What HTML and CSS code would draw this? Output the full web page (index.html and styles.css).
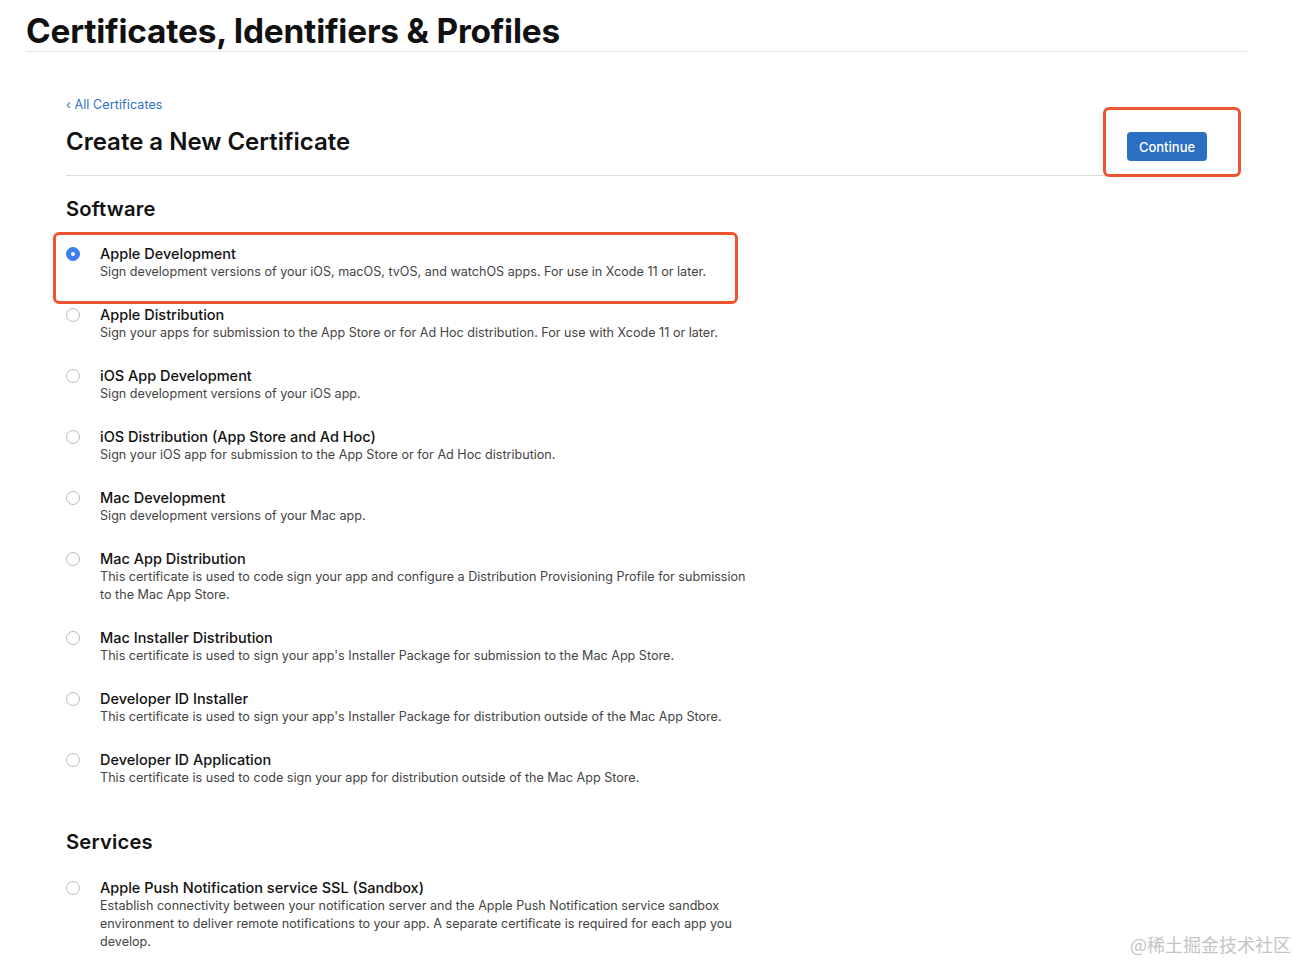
FILE: index.html
```html
<!DOCTYPE html>
<html lang="en">
<head>
<meta charset="utf-8">
<title>Certificates, Identifiers &amp; Profiles</title>
<link rel="stylesheet" href="styles.css">
</head>
<body>
<header class="page-header">
  <h1 class="page-title">Certificates, Identifiers &amp; Profiles</h1>
</header>
<main class="content">
  <div class="top-row">
    <div class="top-left">
      <a class="back-link" href="#">&#8249; All Certificates</a>
      <h2 class="cert-title">Create a New Certificate</h2>
    </div>
    <div class="continue-box">
      <button class="btn-continue" type="button">Continue</button>
    </div>
  </div>

  <section class="group">
    <h3 class="group-title">Software</h3>
    <ul class="options">
      <li class="option selected">
        <span class="radio"></span>
        <div class="option-text">
          <div class="option-name">Apple Development</div>
          <div class="option-desc">Sign development versions of your iOS, macOS, tvOS, and watchOS apps. For use in Xcode 11 or later.</div>
        </div>
      </li>
      <li class="option">
        <span class="radio"></span>
        <div class="option-text">
          <div class="option-name">Apple Distribution</div>
          <div class="option-desc">Sign your apps for submission to the App Store or for Ad Hoc distribution. For use with Xcode 11 or later.</div>
        </div>
      </li>
      <li class="option">
        <span class="radio"></span>
        <div class="option-text">
          <div class="option-name">iOS App Development</div>
          <div class="option-desc">Sign development versions of your iOS app.</div>
        </div>
      </li>
      <li class="option">
        <span class="radio"></span>
        <div class="option-text">
          <div class="option-name">iOS Distribution (App Store and Ad Hoc)</div>
          <div class="option-desc">Sign your iOS app for submission to the App Store or for Ad Hoc distribution.</div>
        </div>
      </li>
      <li class="option">
        <span class="radio"></span>
        <div class="option-text">
          <div class="option-name">Mac Development</div>
          <div class="option-desc">Sign development versions of your Mac app.</div>
        </div>
      </li>
      <li class="option">
        <span class="radio"></span>
        <div class="option-text">
          <div class="option-name">Mac App Distribution</div>
          <div class="option-desc">This certificate is used to code sign your app and configure a Distribution Provisioning Profile for submission to the Mac App Store.</div>
        </div>
      </li>
      <li class="option">
        <span class="radio"></span>
        <div class="option-text">
          <div class="option-name">Mac Installer Distribution</div>
          <div class="option-desc">This certificate is used to sign your app's Installer Package for submission to the Mac App Store.</div>
        </div>
      </li>
      <li class="option">
        <span class="radio"></span>
        <div class="option-text">
          <div class="option-name">Developer ID Installer</div>
          <div class="option-desc">This certificate is used to sign your app's Installer Package for distribution outside of the Mac App Store.</div>
        </div>
      </li>
      <li class="option">
        <span class="radio"></span>
        <div class="option-text">
          <div class="option-name">Developer ID Application</div>
          <div class="option-desc">This certificate is used to code sign your app for distribution outside of the Mac App Store.</div>
        </div>
      </li>
    </ul>
  </section>

  <section class="group services">
    <h3 class="group-title">Services</h3>
    <ul class="options">
      <li class="option">
        <span class="radio"></span>
        <div class="option-text">
          <div class="option-name">Apple Push Notification service SSL (Sandbox)</div>
          <div class="option-desc">Establish connectivity between your notification server and the Apple Push Notification service sandbox environment to deliver remote notifications to your app. A separate certificate is required for each app you develop.</div>
        </div>
      </li>
    </ul>
  </section>
</main>
<div class="watermark">@稀土掘金技术社区</div>
</body>
</html>
```

FILE: styles.css
```css
*, *::before, *::after { box-sizing: border-box; }
html, body { margin: 0; padding: 0; }
body {
  background: #ffffff;
  color: #1d1d1f;
  font-family: Inter, "Noto Sans", "Liberation Sans", sans-serif;
  width: 1297px;
  height: 961px;
  overflow: hidden;
  position: relative;
}
.page-header {
  margin: 0 50px 0 26px;
  border-bottom: 1px solid #e3e3e3;
  padding-top: 11px;
  height: 52px;
}
.page-title {
  margin: 0;
  font-size: 33.4px;
  font-weight: 700;
  line-height: 40px;
  letter-spacing: -0.2px;
  color: #111111;
}
.content {
  padding: 0 56px 0 66px;
}
.top-row {
  display: flex;
  justify-content: space-between;
  align-items: flex-start;
  border-bottom: 1px solid #dcdcdc;
  height: 124px;
  margin-right: 1px;
}
.top-left {
  padding-top: 44px;
}
.back-link {
  display: block;
  color: #2d72c4;
  font-size: 12.5px;
  line-height: 18px;
  text-decoration: none;
  letter-spacing: 0.1px;
}
.cert-title {
  margin: 13px 0 0 0;
  font-size: 24px;
  font-weight: 600;
  line-height: 30px;
  color: #111111;
}
.continue-box {
  margin-top: 55px;
  margin-right: -1px;
  width: 138px;
  height: 70px;
  border: 3px solid #ec5530;
  border-radius: 6px;
  padding: 22px 0 0 21px;
  background: #ffffff;
}
.btn-continue {
  display: block;
  background: #2b6fc2;
  color: #ffffff;
  border: none;
  border-radius: 4px;
  font-family: Inter, "Noto Sans", sans-serif;
  font-size: 13px;
  font-weight: 500;
  width: 80px;
  height: 29px;
  padding: 0;
}
.group-title {
  margin: 20px 0 0 0;
  font-size: 20.2px;
  font-weight: 600;
  line-height: 26px;
  color: #111111;
  letter-spacing: 0.2px;
}
.options {
  list-style: none;
  margin: 23px 0 0 0;
  padding: 0;
  display: flex;
  flex-direction: column;
  gap: 25px;
}
.option {
  display: flex;
  align-items: flex-start;
  position: relative;
}
.option.selected::before {
  content: "";
  position: absolute;
  left: -13px;
  top: -13px;
  width: 685px;
  height: 72px;
  border: 3px solid #ec5530;
  border-radius: 6px;
  pointer-events: none;
}
.radio {
  flex: 0 0 auto;
  width: 14px;
  height: 14px;
  border: 1px solid #bcbcbc;
  border-radius: 50%;
  margin-top: 2px;
  margin-right: 20px;
  background: #fff;
  position: relative;
}
.option.selected .radio {
  background: #3b7cf0;
  border-color: #3b7cf0;
}
.option.selected .radio::after {
  content: "";
  position: absolute;
  width: 4px;
  height: 4px;
  border-radius: 50%;
  background: #fff;
  left: 4px;
  top: 4px;
}
.option-text { flex: 0 0 auto; }
.option-name {
  font-size: 14.5px;
  font-weight: 500;
  line-height: 18px;
  color: #111111;
}
.option-desc {
  font-size: 12.6px;
  line-height: 18px;
  color: #444444;
  width: 652px;
}
.services .group-title { margin-top: 42px; }
.services .options { margin-top: 24px; }
.watermark {
  position: absolute;
  right: 6px;
  bottom: 6px;
  font-family: "Noto Sans CJK SC", sans-serif;
  font-size: 18px;
  color: #c4c4c4;
  line-height: 22px;
}
```
